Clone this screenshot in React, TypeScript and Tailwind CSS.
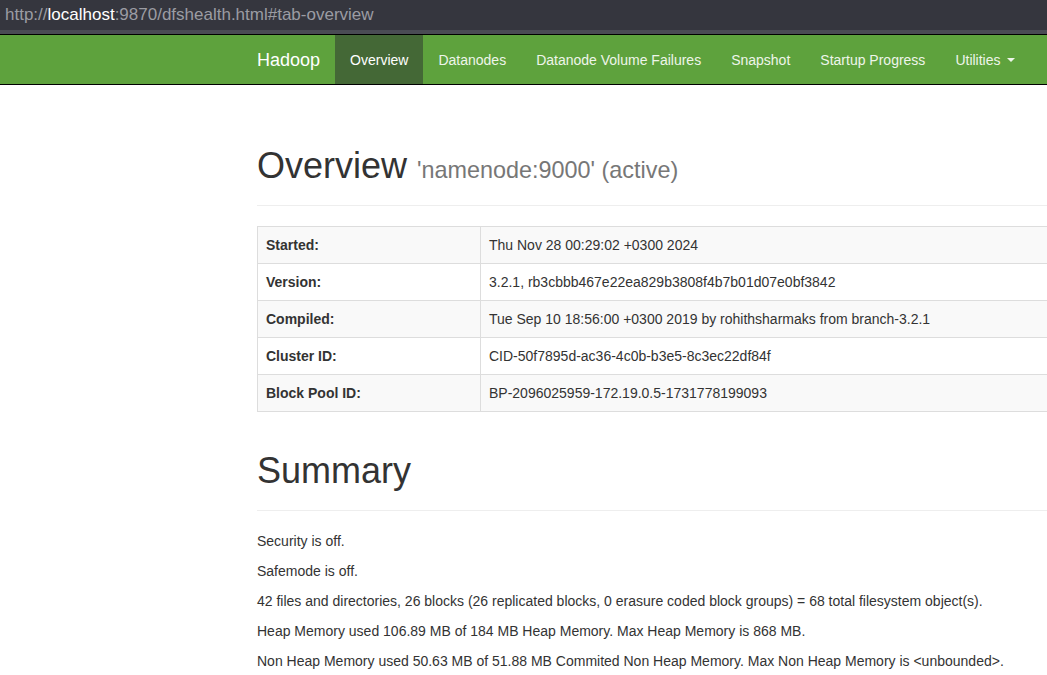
import React from "react";

const navItems = ["Datanodes", "Datanode Volume Failures", "Snapshot", "Startup Progress"];

const rows: [string, string][] = [
  ["Started:", "Thu Nov 28 00:29:02 +0300 2024"],
  ["Version:", "3.2.1, rb3cbbb467e22ea829b3808f4b7b01d07e0bf3842"],
  ["Compiled:", "Tue Sep 10 18:56:00 +0300 2019 by rohithsharmaks from branch-3.2.1"],
  ["Cluster ID:", "CID-50f7895d-ac36-4c0b-b3e5-8c3ec22df84f"],
  ["Block Pool ID:", "BP-2096025959-172.19.0.5-1731778199093"],
];

const summary = [
  "Security is off.",
  "Safemode is off.",
  "42 files and directories, 26 blocks (26 replicated blocks, 0 erasure coded block groups) = 68 total filesystem object(s).",
  "Heap Memory used 106.89 MB of 184 MB Heap Memory. Max Heap Memory is 868 MB.",
  "Non Heap Memory used 50.63 MB of 51.88 MB Commited Non Heap Memory. Max Non Heap Memory is <unbounded>.",
];

export default function App() {
  return (
    <div
      className="w-[1047px] h-[675px] overflow-hidden bg-white text-[#333] text-[14px] leading-[20px]"
      style={{ fontFamily: '"Liberation Sans", Arial, sans-serif' }}
    >
      {/* browser url bar */}
      <div className="h-[30px] bg-[#35363e] flex items-center pl-[5px] text-[17px] text-[#9b9ca3] whitespace-nowrap">
        <span>http://</span>
        <span className="text-white">localhost</span>
        <span>:9870/dfshealth.html#tab-overview</span>
      </div>
      <div className="h-[4px] bg-[#4a4b54]" />

      {/* navbar */}
      <div className="h-[51px] bg-[#5ea23d] border-t border-b border-black flex items-stretch pl-[242px] whitespace-nowrap">
        <div className="px-[15px] flex items-center text-[18px] text-white">Hadoop</div>
        <div className="px-[15px] flex items-center bg-[#446836] text-white">Overview</div>
        {navItems.map((n) => (
          <div key={n} className="px-[15px] flex items-center text-[#eef5ea]">
            {n}
          </div>
        ))}
        <div className="px-[15px] flex items-center text-[#eef5ea]">
          Utilities
          <span className="ml-[6px] w-0 h-0 border-t-[4px] border-t-[#eef5ea] border-x-[4px] border-x-transparent" />
        </div>
      </div>

      {/* content */}
      <div className="ml-[257px] w-[1140px]">
        <div className="mt-[61px] pb-[15px] border-b border-[#eee]">
          <h1 className="text-[36px] leading-[40px] whitespace-nowrap">
            Overview <span className="text-[23.4px] text-[#777]">'namenode:9000' (active)</span>
          </h1>
        </div>

        <table className="mt-[20px] w-full border-collapse border border-[#ddd]">
          <tbody>
            {rows.map(([k, v], i) => (
              <tr key={k} className={i % 2 === 0 ? "bg-[#f9f9f9]" : "bg-white"}>
                <th className="w-[223px] text-left font-bold border border-[#ddd] px-[8px] py-[8px] leading-[20px]">
                  {k}
                </th>
                <td className="border border-[#ddd] px-[8px] py-[8px] leading-[20px]">{v}</td>
              </tr>
            ))}
          </tbody>
        </table>

        <div className="mt-[39px] pb-[19px] border-b border-[#eee]">
          <h1 className="text-[36px] leading-[40px]">Summary</h1>
        </div>

        <div className="mt-[20px] whitespace-nowrap">
          {summary.map((s) => (
            <p key={s} className="mb-[10px]">
              {s}
            </p>
          ))}
        </div>
      </div>
    </div>
  );
}
